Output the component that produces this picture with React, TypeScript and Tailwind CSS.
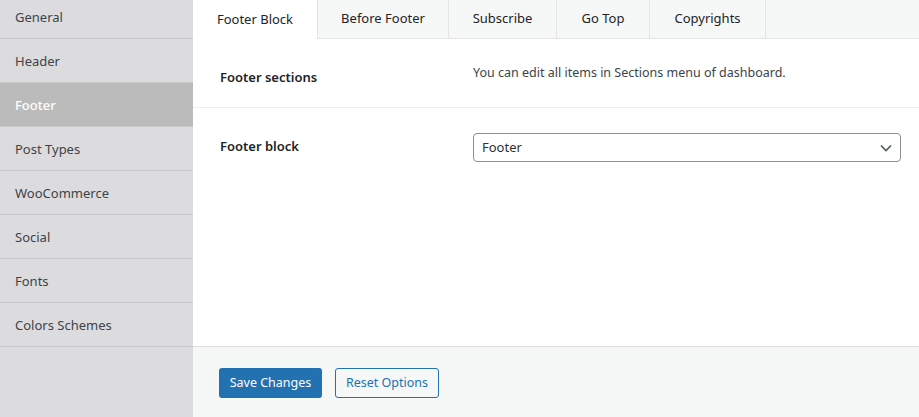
import React from 'react'

const menu = ['General', 'Header', 'Footer', 'Post Types', 'WooCommerce', 'Social', 'Fonts', 'Colors Schemes']
const tabs = [
  { label: 'Footer Block', w: 'w-[125px]' },
  { label: 'Before Footer', w: 'w-[131px]' },
  { label: 'Subscribe', w: 'w-[108px]' },
  { label: 'Go Top', w: 'w-[93px]' },
  { label: 'Copyrights', w: 'w-[116px]' },
]

const App = () => {
  return (
    <div className="flex h-[417px] w-[919px] overflow-hidden bg-[#dcdcde] font-['Segoe_UI','Noto_Sans',sans-serif] text-[#3c434a]">
      <aside className="w-[193px] shrink-0 flex flex-col">
        {menu.map((item, i) => (
          <div
            key={item}
            className={
              (i === 0 ? 'h-[39px] pb-[2px] ' : 'h-[44px] pt-[2px] ') +
              'flex items-center px-[15px] text-[13px] border-b border-[#c8c8cb] ' +
              (item === 'Footer' ? 'bg-[#bbbbbb] text-white font-medium' : '')
            }
          >
            {item}
          </div>
        ))}
      </aside>
      <main className="flex-1 flex flex-col bg-white">
        <div className="flex h-[39px] bg-[#f6f7f7] border-b border-[#e5e5e5]">
          {tabs.map((t, i) => (
            <div
              key={t.label}
              className={
                t.w +
                ' flex items-center justify-center whitespace-nowrap text-[13px] text-[#1d2327] border-r border-[#e5e5e5] ' +
                (i === 0 ? 'bg-white h-[39px] -mb-px' : '')
              }
            >
              {t.label}
            </div>
          ))}
        </div>
        <div className="flex items-center h-[69px] border-b border-[#ececec] px-[27px]">
          <div className="w-[253px] text-[13px] font-semibold text-[#1d2327] pt-[9px]">Footer sections</div>
          <div className="text-[12.5px] text-[#3c434a]">You can edit all items in Sections menu of dashboard.</div>
        </div>
        <div className="flex px-[27px] pt-[25px] flex-1">
          <div className="w-[253px] text-[13px] font-semibold text-[#1d2327] pt-[4px]">Footer block</div>
          <div className="flex items-center justify-between w-[428px] h-[29px] border border-[#8c8f94] rounded-[4px] pl-[8px] pr-[8px] text-[13px] text-[#2c3338]">
            <span>Footer</span>
            <svg width="12" height="8" viewBox="0 0 12 8" fill="none" stroke="#50575e" strokeWidth="1.6">
              <path d="M1 1.5l5 5 5-5" />
            </svg>
          </div>
        </div>
        <div className="h-[71px] bg-[#f6f7f7] border-t border-[#dcdcde] flex items-center gap-[13px] px-[26px] pt-[2px]">
          <button className="h-[30px] w-[103px] rounded-[3px] bg-[#2271b1] text-white text-[12.5px]">Save Changes</button>
          <button className="h-[30px] w-[104px] rounded-[3px] border border-[#2271b1] text-[#2271b1] text-[12.5px] bg-[#f6f7f7]">
            Reset Options
          </button>
        </div>
      </main>
    </div>
  )
}

export default App
